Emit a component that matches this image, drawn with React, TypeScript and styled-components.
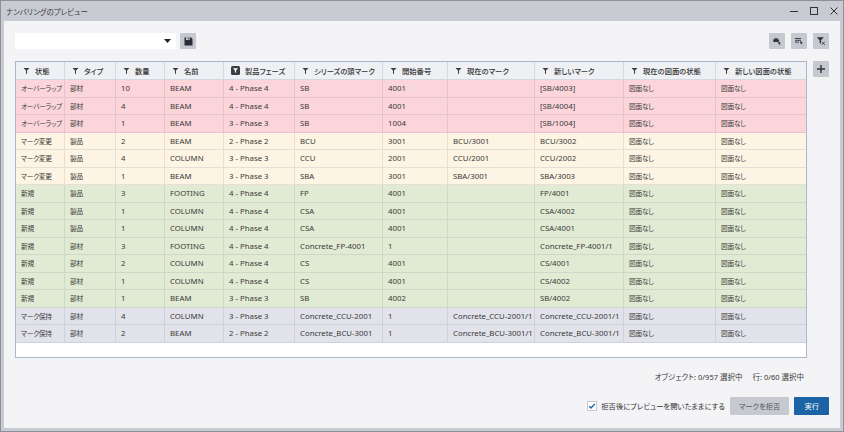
import React from 'react';
import styled, { createGlobalStyle } from 'styled-components';

const GlobalStyle = createGlobalStyle`
  html, body {
    margin: 0;
    padding: 0;
    background: #c9cbd2;
  }
  body {
    font-family: "Noto Sans", "Noto Sans CJK JP", sans-serif;
    color: #333;
  }
`;

const COLS = '49px 51px 49px 59px 71px 88px 65px 87px 89px 92px 1fr';

const Window = styled.div`
  box-sizing: border-box;
  width: 844px;
  height: 432px;
  display: flex;
  flex-direction: column;
  background: #c9cbd2;
  border: 1px solid #8d9097;
`;

const TitleBar = styled.div`
  height: 20px;
  display: flex;
  align-items: center;
  justify-content: space-between;
  padding-left: 5px;
`;

const Title = styled.span`
  font-family: "Noto Sans CJK JP", sans-serif;
  font-feature-settings: "palt";
  font-size: 7.5px;
  color: #3c3c3c;
`;

const Controls = styled.div`
  display: flex;
  align-items: center;
  gap: 10px;
  padding-right: 4px;
`;

const Body = styled.div`
  flex: 1;
  margin: 0 3px 3px 3px;
  background: #f4f4f7;
  display: flex;
  flex-direction: column;
  padding: 12px 11px 13px 11px;
  min-height: 0;
`;

const Toolbar = styled.div`
  display: flex;
  align-items: center;
  height: 16px;
  gap: 4px;
`;

const Dropdown = styled.div`
  box-sizing: border-box;
  width: 161px;
  height: 16px;
  background: #fff;
  display: flex;
  align-items: center;
  justify-content: flex-end;
  padding-right: 5px;
`;

const IconButton = styled.div<{ $size?: number }>`
  width: ${(p) => p.$size ?? 16}px;
  height: ${(p) => p.$size ?? 16}px;
  background: #c5c8cf;
  border-radius: 1px;
  display: flex;
  align-items: center;
  justify-content: center;
`;

const Spacer = styled.div`
  flex: 1;
`;

const ToolGroup = styled.div`
  display: flex;
  gap: 6px;
`;

const Main = styled.div`
  flex: 1;
  display: flex;
  gap: 6px;
  margin-top: 12px;
  min-height: 0;
`;

const Table = styled.div`
  box-sizing: border-box;
  flex: 1;
  background: #fff;
  border: 1px solid #a9b7cb;
  overflow: hidden;
`;

const HeaderRow = styled.div`
  box-sizing: border-box;
  display: grid;
  grid-template-columns: ${COLS};
  height: 18px;
  background: #eef0f4;
  border-bottom: 1px solid #d3d7df;
`;

const HeaderCell = styled.div`
  display: flex;
  align-items: center;
  gap: 5px;
  padding-left: 7px;
  border-right: 1px solid #d6d9e1;
  font-family: "Noto Sans CJK JP", sans-serif;
  font-feature-settings: "palt";
  font-size: 7.3px;
  font-weight: 500;
  color: #333;
  white-space: nowrap;
  overflow: hidden;
  &:last-child {
    border-right: none;
  }
`;

const TONES: Record<string, string> = {
  overlap: '#fbd5d9',
  change: '#fdf4e3',
  fresh: '#e1ebd3',
  keep: '#e1e2ea',
};

const Row = styled.div<{ $tone: string }>`
  box-sizing: border-box;
  display: grid;
  grid-template-columns: ${COLS};
  height: 17.5px;
  background: ${(p) => TONES[p.$tone]};
  border-bottom: 1px solid rgba(110, 120, 140, 0.16);
`;

const Cell = styled.div<{ $jp: boolean }>`
  display: flex;
  align-items: center;
  padding-left: 5px;
  border-right: 1px solid rgba(110, 120, 140, 0.16);
  font-family: ${(p) => (p.$jp ? '"Noto Sans CJK JP", sans-serif' : '"Noto Sans", "Noto Sans CJK JP", sans-serif')};
  font-feature-settings: "palt";
  font-size: ${(p) => (p.$jp ? '6.7px' : '7.8px')};
  letter-spacing: ${(p) => (p.$jp ? '-0.25px' : '0')};
  color: #3a3a3a;
  white-space: nowrap;
  overflow: hidden;
  &:last-child {
    border-right: none;
  }
`;

const SideColumn = styled.div`
  display: flex;
  flex-direction: column;
`;

const Status = styled.div`
  margin-top: 11px;
  height: 14px;
  display: flex;
  justify-content: flex-end;
  align-items: center;
  gap: 10px;
  padding-right: 25px;
  font-family: "Noto Sans", "Noto Sans CJK JP", sans-serif;
  font-feature-settings: "palt";
  font-size: 7.5px;
  color: #3a3a3a;
`;

const Footer = styled.div`
  margin-top: 14px;
  display: flex;
  justify-content: flex-end;
  align-items: center;
  gap: 5px;
`;

const CheckLabel = styled.label`
  display: flex;
  align-items: center;
  gap: 4px;
  font-family: "Noto Sans CJK JP", sans-serif;
  font-feature-settings: "palt";
  font-size: 7.3px;
  color: #333;
`;

const CheckBox = styled.span`
  box-sizing: border-box;
  width: 10px;
  height: 10px;
  background: #fff;
  border: 1px solid #c5c8cf;
  display: flex;
  align-items: center;
  justify-content: center;
`;

const Button = styled.div<{ $primary?: boolean }>`
  height: 18px;
  padding: 0 ${(p) => (p.$primary ? 10 : 9)}px;
  display: flex;
  align-items: center;
  background: ${(p) => (p.$primary ? '#1b63a5' : '#c6c9d0')};
  color: ${(p) => (p.$primary ? '#fff' : '#555')};
  font-family: "Noto Sans CJK JP", sans-serif;
  font-feature-settings: "palt";
  font-size: 7.3px;
  border-radius: 1px;
`;

const FilterIcon = ({ active }: { active?: boolean }) =>
  active ? (
    <svg width="9" height="9" viewBox="0 0 9 9">
      <rect x="0" y="0" width="9" height="9" rx="1.5" fill="#3a3d44" />
      <path d="M2 2.3h5L5.1 4.6V7L3.9 6.3V4.6z" fill="#fff" />
    </svg>
  ) : (
    <svg width="7" height="8" viewBox="0 0 7 8">
      <path d="M0.5 1h6L4 3.6V7.2L3 6.6V3.6z" fill="#3a3d44" />
    </svg>
  );

const columns = ['状態', 'タイプ', '数量', '名前', '製品フェーズ', 'シリーズの頭マーク', '開始番号', '現在のマーク', '新しいマーク', '現在の図面の状態', '新しい図面の状態'];

type RowData = { tone: string; cells: string[] };

const rows: RowData[] = [
  { tone: 'overlap', cells: ['オーバーラップ', '部材', '10', 'BEAM', '4 - Phase 4', 'SB', '4001', '', '[SB/4003]', '図面なし', '図面なし'] },
  { tone: 'overlap', cells: ['オーバーラップ', '部材', '4', 'BEAM', '4 - Phase 4', 'SB', '4001', '', '[SB/4004]', '図面なし', '図面なし'] },
  { tone: 'overlap', cells: ['オーバーラップ', '部材', '1', 'BEAM', '3 - Phase 3', 'SB', '1004', '', '[SB/1004]', '図面なし', '図面なし'] },
  { tone: 'change', cells: ['マーク変更', '製品', '2', 'BEAM', '2 - Phase 2', 'BCU', '3001', 'BCU/3001', 'BCU/3002', '図面なし', '図面なし'] },
  { tone: 'change', cells: ['マーク変更', '製品', '4', 'COLUMN', '3 - Phase 3', 'CCU', '2001', 'CCU/2001', 'CCU/2002', '図面なし', '図面なし'] },
  { tone: 'change', cells: ['マーク変更', '製品', '1', 'BEAM', '3 - Phase 3', 'SBA', '3001', 'SBA/3001', 'SBA/3003', '図面なし', '図面なし'] },
  { tone: 'fresh', cells: ['新規', '製品', '3', 'FOOTING', '4 - Phase 4', 'FP', '4001', '', 'FP/4001', '図面なし', '図面なし'] },
  { tone: 'fresh', cells: ['新規', '製品', '1', 'COLUMN', '4 - Phase 4', 'CSA', '4001', '', 'CSA/4002', '図面なし', '図面なし'] },
  { tone: 'fresh', cells: ['新規', '製品', '1', 'COLUMN', '4 - Phase 4', 'CSA', '4001', '', 'CSA/4001', '図面なし', '図面なし'] },
  { tone: 'fresh', cells: ['新規', '部材', '3', 'FOOTING', '4 - Phase 4', 'Concrete_FP-4001', '1', '', 'Concrete_FP-4001/1', '図面なし', '図面なし'] },
  { tone: 'fresh', cells: ['新規', '部材', '2', 'COLUMN', '4 - Phase 4', 'CS', '4001', '', 'CS/4001', '図面なし', '図面なし'] },
  { tone: 'fresh', cells: ['新規', '部材', '1', 'COLUMN', '4 - Phase 4', 'CS', '4001', '', 'CS/4002', '図面なし', '図面なし'] },
  { tone: 'fresh', cells: ['新規', '部材', '1', 'BEAM', '3 - Phase 3', 'SB', '4002', '', 'SB/4002', '図面なし', '図面なし'] },
  { tone: 'keep', cells: ['マーク保持', '部材', '4', 'COLUMN', '3 - Phase 3', 'Concrete_CCU-2001', '1', 'Concrete_CCU-2001/1', 'Concrete_CCU-2001/1', '図面なし', '図面なし'] },
  { tone: 'keep', cells: ['マーク保持', '部材', '2', 'BEAM', '2 - Phase 2', 'Concrete_BCU-3001', '1', 'Concrete_BCU-3001/1', 'Concrete_BCU-3001/1', '図面なし', '図面なし'] },
];

const isJp = (s: string) => /[\u3040-\u30ff\u4e00-\u9fff]/.test(s);

export default function App() {
  return (
    <>
      <GlobalStyle />
      <Window>
        <TitleBar>
          <Title>ナンバリングのプレビュー</Title>
          <Controls>
            <svg width="10" height="10" viewBox="0 0 10 10">
              <path d="M1 5.5h8" stroke="#333" strokeWidth="1" />
            </svg>
            <svg width="10" height="10" viewBox="0 0 10 10">
              <rect x="1.5" y="1.5" width="7" height="7" fill="none" stroke="#333" strokeWidth="1" />
            </svg>
            <svg width="10" height="10" viewBox="0 0 10 10">
              <path d="M1.5 1.5l7 7M8.5 1.5l-7 7" stroke="#333" strokeWidth="1" />
            </svg>
          </Controls>
        </TitleBar>
        <Body>
          <Toolbar>
            <Dropdown>
              <svg width="7" height="4" viewBox="0 0 7 4">
                <path d="M0 0h7L3.5 4z" fill="#222" />
              </svg>
            </Dropdown>
            <IconButton>
              <svg width="9" height="9" viewBox="0 0 9 9">
                <path d="M0.5 0.5h6.5l1.5 1.5v6.5h-8z" fill="#2b2e35" />
                <rect x="2" y="0.5" width="4" height="2.5" fill="#c5c8cf" />
                <rect x="4.3" y="0.9" width="1" height="1.7" fill="#2b2e35" />
              </svg>
            </IconButton>
            <Spacer />
            <ToolGroup>
              <IconButton>
                <svg width="10" height="10" viewBox="0 0 10 10">
                  <circle cx="2.8" cy="4.6" r="1.7" fill="#2f3238" />
                  <circle cx="5.4" cy="4.6" r="1.7" fill="#2f3238" />
                  <rect x="2.6" y="2.2" width="2.9" height="1.4" fill="#2f3238" />
                  <path d="M6.4 5.6l2.6 1.5-1.2.3.6 1.4-.6.3-.6-1.4-.8.8z" fill="#2f3238" />
                </svg>
              </IconButton>
              <IconButton>
                <svg width="10" height="10" viewBox="0 0 10 10">
                  <path d="M1 2.5h6M1 4.3h6M1 6.1h4" stroke="#2f3238" strokeWidth="0.9" />
                  <path d="M6.3 5l2.6 1.6-1.2.3.6 1.4-.6.3-.6-1.4-.8.8z" fill="#2f3238" />
                </svg>
              </IconButton>
              <IconButton>
                <svg width="10" height="10" viewBox="0 0 10 10">
                  <path d="M0.8 1.2h7L5 4.2v3.5L3.6 6.8V4.2z" fill="#2f3238" />
                  <path d="M5.8 5.8l3 3M8.8 5.8l-3 3" stroke="#2f3238" strokeWidth="0.9" />
                </svg>
              </IconButton>
            </ToolGroup>
          </Toolbar>
          <Main>
            <Table>
              <HeaderRow>
                {columns.map((c, i) => (
                  <HeaderCell key={c}>
                    <FilterIcon active={i === 4} />
                    {c}
                  </HeaderCell>
                ))}
              </HeaderRow>
              {rows.map((r, ri) => (
                <Row key={ri} $tone={r.tone}>
                  {r.cells.map((c, ci) => (
                    <Cell key={ci} $jp={isJp(c)}>
                      {c}
                    </Cell>
                  ))}
                </Row>
              ))}
            </Table>
            <SideColumn>
              <IconButton>
                <svg width="10" height="10" viewBox="0 0 10 10">
                  <path d="M5 1v8M1 5h8" stroke="#2f3238" strokeWidth="1.4" />
                </svg>
              </IconButton>
            </SideColumn>
          </Main>
          <Status>
            <span>オブジェクト: 0/957 選択中</span>
            <span>行: 0/60 選択中</span>
          </Status>
          <Footer>
            <CheckLabel>
              <CheckBox>
                <svg width="8" height="8" viewBox="0 0 8 8">
                  <path d="M1.2 4.2l1.8 1.8 3.8-4" stroke="#1b63a5" strokeWidth="1.3" fill="none" />
                </svg>
              </CheckBox>
              拒否後にプレビューを開いたままにする
            </CheckLabel>
            <Button>マークを拒否</Button>
            <Button $primary>実行</Button>
          </Footer>
        </Body>
      </Window>
    </>
  );
}
